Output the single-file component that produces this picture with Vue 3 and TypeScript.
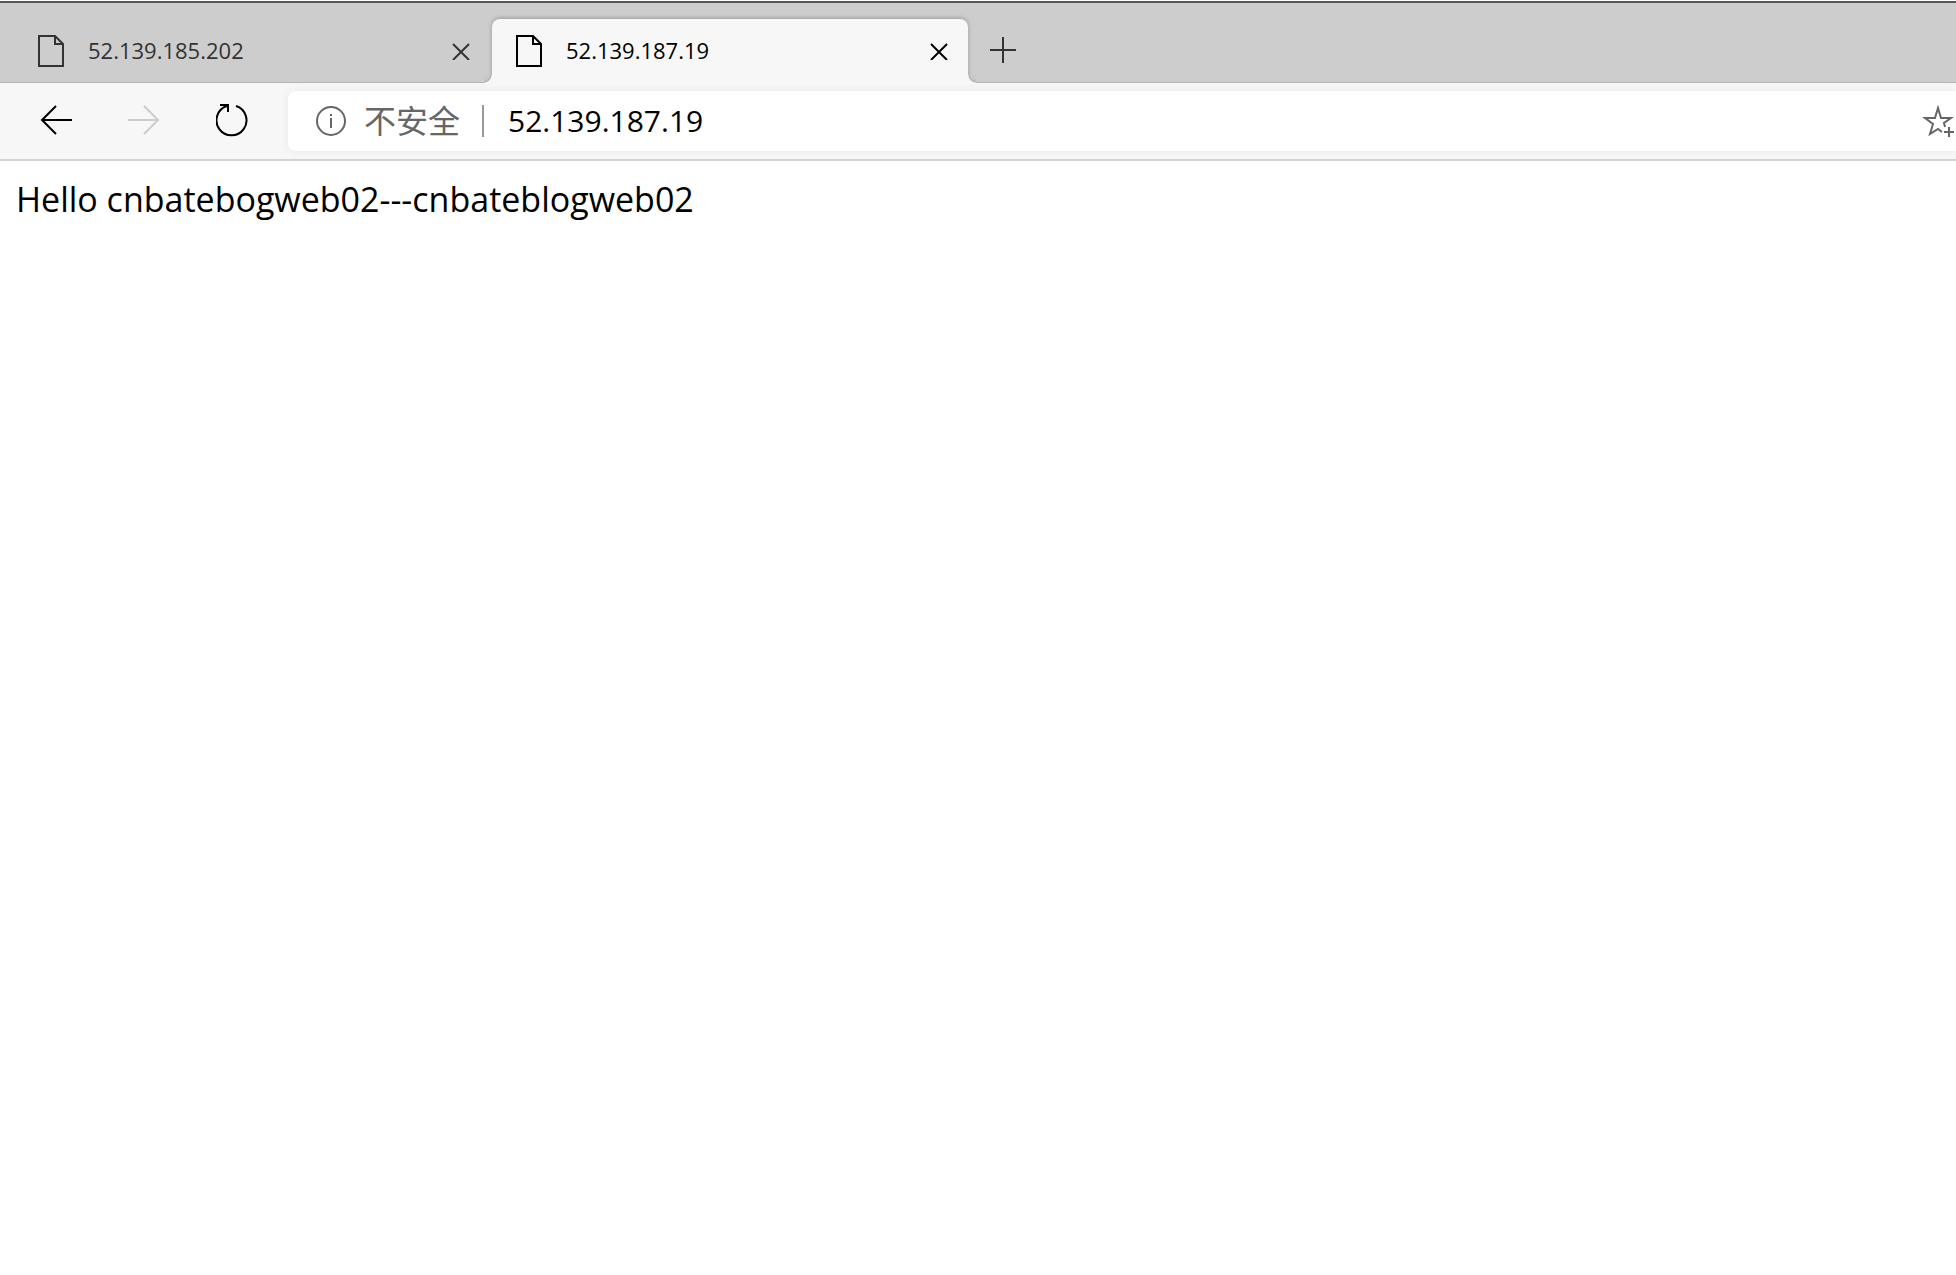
<script setup lang="ts">
import { ref } from 'vue'

interface Tab {
  id: number
  title: string
}

const tabs: Tab[] = [
  { id: 1, title: '52.139.185.202' },
  { id: 2, title: '52.139.187.19' },
]
const activeId = ref(2)
const address = ref('52.139.187.19')
</script>

<template>
  <div class="browser">
    <header>
      <div class="strip">
        <div v-for="tab in tabs" :key="tab.id" class="tab" :class="{ active: tab.id === activeId }">
          <button class="title" type="button" @click="activeId = tab.id">
            <svg width="26" height="32" viewBox="0 0 26 32" fill="none" stroke="currentColor" stroke-width="2" aria-hidden="true">
              <path d="M1 1H17L25 9V31H1Z M17 1V9H25" />
            </svg>
            <span>{{ tab.title }}</span>
          </button>
          <button class="close" type="button" aria-label="Close tab">
            <svg width="18" height="18" viewBox="0 0 18 18" fill="none" stroke="currentColor" stroke-width="2" aria-hidden="true">
              <path d="M1 2L17 18M17 2L1 18" />
            </svg>
          </button>
        </div>
        <button class="add" type="button" aria-label="New tab">
          <svg width="26" height="26" viewBox="0 0 26 26" fill="none" stroke="currentColor" stroke-width="2" aria-hidden="true">
            <path d="M13 0V26M0 13H26" />
          </svg>
        </button>
      </div>

      <div class="toolbar">
        <nav class="controls">
          <button type="button" aria-label="Back">
            <svg width="32" height="32" viewBox="0 0 32 32" fill="none" stroke="currentColor" stroke-width="2" aria-hidden="true">
              <path d="M32 16H2M16 2L2 16L16 30" />
            </svg>
          </button>
          <button type="button" aria-label="Forward" disabled>
            <svg width="32" height="32" viewBox="0 0 32 32" fill="none" stroke="currentColor" stroke-width="2" aria-hidden="true">
              <path d="M0 16H30M16 2L30 16L16 30" />
            </svg>
          </button>
          <button type="button" aria-label="Reload">
            <svg width="32" height="34" viewBox="0 0 32 34" fill="none" stroke="currentColor" stroke-width="2" aria-hidden="true">
              <path d="M20 3A15 15 0 1 1 11 3M4 2H12V9" />
            </svg>
          </button>
        </nav>
        <div class="address">
          <button class="site" type="button">
            <svg width="30" height="30" viewBox="0 0 30 30" fill="none" stroke="currentColor" stroke-width="2" aria-hidden="true">
              <circle cx="15" cy="15" r="14" />
              <path d="M15 12V22M15 8V10" />
            </svg>
            <span>不安全</span>
          </button>
          <span class="divider"></span>
          <input v-model="address" type="text" aria-label="Address" spellcheck="false" />
          <button class="star" type="button" aria-label="Add to favorites">
            <svg width="32" height="32" viewBox="0 0 32 32" fill="none" stroke="currentColor" stroke-width="2" aria-hidden="true">
              <path d="M20 27L16 24L8 29L11 19L3 13H13L16 3L19 13H29L22 18L23 22" />
              <path d="M27 22V32M22 27H32" />
            </svg>
          </button>
        </div>
      </div>
    </header>
    <main>Hello cnbatebogweb02---cnbateblogweb02</main>
  </div>
</template>

<style>
body {
  margin: 0;
  background: #fff;
}
</style>

<style scoped>
.browser {
  font-family: "Open Sans", "Noto Sans CJK SC", sans-serif;
  color: #000;
  overflow: hidden;
}
button {
  display: flex;
  align-items: center;
  padding: 0;
  border: 0;
  background: none;
  color: inherit;
  font: inherit;
}
svg {
  display: block;
  flex: none;
}
.strip {
  display: flex;
  gap: 2px;
  height: 64px;
  padding: 16px 0 0 14px;
  background: #cdcdcd;
  border-top: 2px solid #555a55;
  margin-top: 1px;
  box-shadow: inset 0 -1px #b4b4b4;
}
.tab {
  position: relative;
  display: flex;
  align-items: center;
  box-sizing: border-box;
  width: 476px;
  padding: 0 20px 0 24px;
  color: #333;
  font-size: 22px;
  line-height: 30px;
}
.tab.active {
  background: #f7f7f7;
  border-radius: 8px 8px 0 0;
  color: #000;
  box-shadow: 0 -1px 4px #999;
  clip-path: inset(-8px -8px 0 -8px);
}
.tab.active::before,
.tab.active::after {
  content: "";
  position: absolute;
  bottom: 0;
  width: 8px;
  height: 8px;
}
.tab.active::before {
  right: 100%;
  background: radial-gradient(circle at 0 0, #c8c8c8 5px, #b4b4b4 7px, #f7f7f7 8px);
}
.tab.active::after {
  left: 100%;
  background: radial-gradient(circle at 100% 0, #c8c8c8 5px, #b4b4b4 7px, #f7f7f7 8px);
}
.title {
  flex: 1;
  gap: 24px;
}
.title span {
  padding-bottom: 2px;
}
.add {
  padding: 0 20px 2px;
  color: #333;
}
.toolbar {
  display: flex;
  align-items: center;
  height: 76px;
  background: #f7f7f7;
  border-bottom: 2px solid #d3d3d3;
}
.controls {
  display: flex;
  gap: 56px;
  padding: 0 40px 2px;
}
.controls button:disabled {
  color: #ccc;
}
.address {
  flex: 1;
  display: flex;
  align-items: center;
  height: 60px;
  padding: 0 2px 0 28px;
  background: #fff;
  border-radius: 8px 0 0 8px;
  box-shadow: 0 0 8px #e8e8e8;
}
.site {
  gap: 18px;
  color: #666;
  font-size: 32px;
  line-height: 40px;
}
.divider {
  width: 2px;
  height: 32px;
  margin: 0 24px 0 22px;
  background: #999;
}
input {
  flex: 1;
  min-width: 0;
  padding: 0;
  border: 0;
  outline: 0;
  background: none;
  color: #000;
  font: inherit;
  font-size: 30px;
  line-height: 40px;
}
.star {
  color: #666;
}
main {
  padding: 16px;
  font-size: 34px;
  line-height: 44px;
}
</style>
